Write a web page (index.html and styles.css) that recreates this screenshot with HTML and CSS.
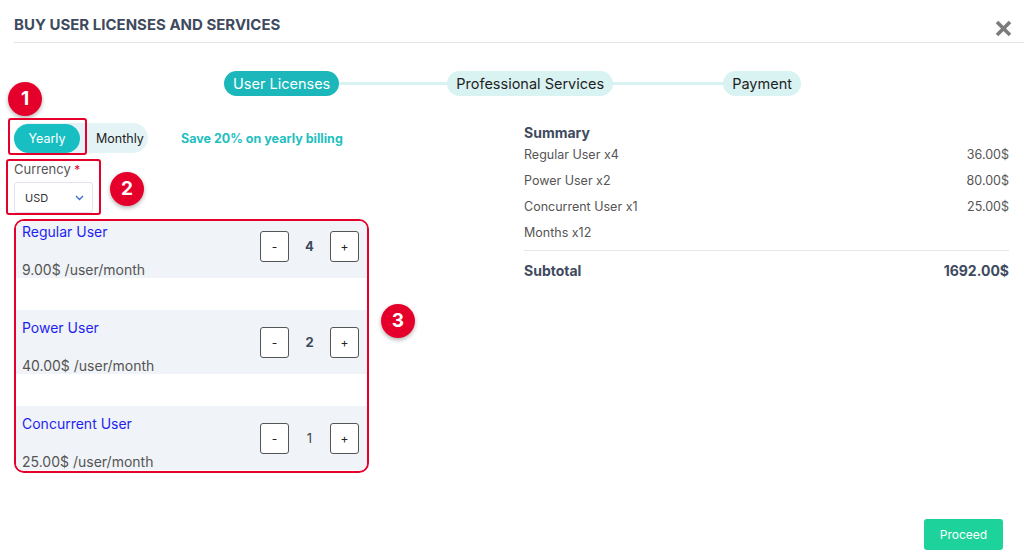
FILE: index.html
```html
<!DOCTYPE html>
<html>
<head>
<meta charset="utf-8">
<link rel="stylesheet" href="styles.css">
</head>
<body>
<div class="page">
  <header class="header">
    <h1 class="title">BUY USER LICENSES AND SERVICES</h1>
    <button class="close" aria-label="Close">
      <svg width="17" height="17" viewBox="0 0 17 17"><path d="M2 2 L15 15 M15 2 L2 15" stroke="#7b7b7b" stroke-width="3.6" stroke-linecap="butt"/></svg>
    </button>
  </header>

  <nav class="stepper">
    <span class="step active">User Licenses</span>
    <span class="connector"></span>
    <span class="step">Professional Services</span>
    <span class="connector connector2"></span>
    <span class="step">Payment</span>
  </nav>

  <main class="main">
    <section class="left">
      <span class="badge badge1">1</span>
      <span class="mark mark1"></span>
      <span class="badge badge2">2</span>
      <span class="mark mark2"></span>
      <span class="badge badge3">3</span>

      <div class="billing-row">
        <div class="toggle">
          <span class="opt on">Yearly</span>
          <span class="opt">Monthly</span>
        </div>
        <span class="save">Save 20% on yearly billing</span>
      </div>

      <div class="currency">
        <label class="label">Currency <span class="req">*</span></label>
        <div class="select">
          <span>USD</span>
          <svg width="9" height="6" viewBox="0 0 9 6"><path d="M1 1 L4.5 4.5 L8 1" fill="none" stroke="#3b6fd4" stroke-width="1.4"/></svg>
        </div>
      </div>

      <div class="list">
        <div class="item first">
          <div class="info">
            <div class="name">Regular User</div>
            <div class="price">9.00$ /user/month</div>
          </div>
          <div class="qty">
            <button class="qbtn">-</button>
            <span class="num">4</span>
            <button class="qbtn">+</button>
          </div>
        </div>
        <div class="item">
          <div class="info">
            <div class="name">Power User</div>
            <div class="price">40.00$ /user/month</div>
          </div>
          <div class="qty">
            <button class="qbtn">-</button>
            <span class="num">2</span>
            <button class="qbtn">+</button>
          </div>
        </div>
        <div class="item">
          <div class="info">
            <div class="name">Concurrent User</div>
            <div class="price">25.00$ /user/month</div>
          </div>
          <div class="qty">
            <button class="qbtn">-</button>
            <span class="num num-light">1</span>
            <button class="qbtn">+</button>
          </div>
        </div>
      </div>
    </section>

    <section class="summary">
      <h2 class="sum-title">Summary</h2>
      <div class="sum-row"><span>Regular User x4</span><span>36.00$</span></div>
      <div class="sum-row"><span>Power User x2</span><span>80.00$</span></div>
      <div class="sum-row"><span>Concurrent User x1</span><span>25.00$</span></div>
      <div class="sum-row"><span>Months x12</span><span></span></div>
      <div class="sum-total"><span>Subtotal</span><span>1692.00$</span></div>
    </section>
  </main>

  <footer class="footer">
    <button class="proceed">Proceed</button>
  </footer>
</div>
</body>
</html>
```

FILE: styles.css
```css
* { box-sizing: border-box; }
html, body { margin: 0; padding: 0; background: #fff; }
body { font-family: Inter, "Noto Sans", "Liberation Sans", sans-serif; color: #333; }
.page { width: 1024px; height: 556px; overflow: hidden; }

.header {
  margin-left: 14px;
  height: 43px;
  border-bottom: 1px solid #e3e5e9;
  display: flex;
  justify-content: space-between;
  align-items: flex-start;
}
.title {
  margin: 15px 0 0 0;
  font-size: 15px;
  line-height: 20px;
  font-weight: 700;
  color: #3e4a5e;
}
.close {
  margin: 20px 12px 0 0;
  padding: 0;
  border: 0;
  background: none;
  width: 17px;
  height: 17px;
  display: flex;
}

.stepper {
  display: flex;
  justify-content: center;
  align-items: center;
  padding-top: 28px;
  padding-left: 1px;
}
.step {
  height: 25px;
  border-radius: 13px;
  background: #d9f2f2;
  color: #1f1f1f;
  font-size: 14.5px;
  line-height: 25px;
  padding: 0 9px;
  white-space: nowrap;
}
.step.active { background: #1bb7bb; color: #fff; }
.connector { width: 108px; height: 3px; background: #d9f2f2; }
.connector2 { width: 110px; }

.main { display: flex; padding: 0 15px 0 14px; }
.left { position: relative; width: 355px; padding-top: 27px; }

.badge {
  position: absolute;
  width: 34px; height: 34px;
  border-radius: 50%;
  background: #e5002b;
  color: #fff;
  font-weight: 700;
  font-size: 19px;
  line-height: 34px;
  text-align: center;
  box-shadow: 0 2px 4px rgba(0,0,0,0.3);
  z-index: 2;
}
.badge1 { left: -6px; top: -14px; }
.badge2 { left: 96px; top: 76px; }
.badge3 { left: 367px; top: 208px; }

.mark {
  position: absolute;
  border: 2px solid #e5002b;
  border-radius: 3px;
  z-index: 2;
}
.mark1 { left: -6px; top: 22px; width: 79px; height: 37px; }
.mark2 { left: -8px; top: 63px; width: 95px; height: 56px; }

.billing-row { display: flex; align-items: center; height: 30px; }
.toggle {
  display: flex;
  align-items: center;
  width: 134px;
  height: 30px;
  border-radius: 15px;
  background: #e4f4f6;
}
.opt { font-size: 12.5px; color: #222; height: 29px; line-height: 29px; }
.opt.on {
  width: 66px;
  text-align: center;
  background: #17bfc3;
  color: #fff;
  border-radius: 15px;
  margin-right: 16px;
}
.save {
  margin-left: 33px;
  font-size: 12.5px;
  font-weight: 700;
  color: #1fbfc0;
}

.currency { padding-top: 9px; }
.label { display: block; font-size: 13px; line-height: 15px; color: #555; }
.req { color: #e5002b; font-size: 12px; vertical-align: top; }
.select {
  margin-top: 5px;
  width: 79px;
  height: 31px;
  border: 1px solid #dfe4f0;
  border-radius: 3px;
  display: flex;
  align-items: center;
  justify-content: space-between;
  padding: 0 8px 0 10px;
  font-size: 11px;
  color: #333;
}

.list {
  margin-top: 6px;
  width: 355px;
  height: 254px;
  border: 2px solid #e5002b;
  border-radius: 10px;
  overflow: hidden;
}
.item {
  height: 64px;
  background: #f0f3f7;
  display: flex;
  justify-content: space-between;
  align-items: center;
  padding: 0 8px 0 6px;
  margin-top: 32px;
}
.item.first { margin-top: -7px; }
.info { align-self: stretch; padding-top: 9px; }
.name { font-size: 14px; line-height: 18px; color: #1f1ff0; }
.price { margin-top: 20px; font-size: 14px; line-height: 18px; color: #555; }
.qty { display: flex; align-items: center; }
.qbtn {
  width: 29px; height: 31px;
  border: 1px solid #555;
  border-radius: 3px;
  background: #fff;
  font-family: inherit;
  font-size: 12px;
  color: #222;
  padding: 0;
}
.num { width: 41px; text-align: center; font-size: 13px; font-weight: 700; color: #3e4a5e; }
.num-light { font-weight: 400; color: #444; }

.summary { flex: 1; margin-left: 155px; padding-top: 28px; }
.sum-title { margin: 0; font-size: 14px; line-height: 18px; font-weight: 700; color: #3e4a5e; }
.sum-row {
  display: flex; justify-content: space-between;
  height: 26px; line-height: 26px;
  font-size: 12.5px; color: #555;
}
.sum-total {
  margin-top: 4px;
  border-top: 1px solid #e5e7ea;
  padding-top: 10px;
  display: flex; justify-content: space-between;
  font-size: 14px; line-height: 20px; font-weight: 700; color: #3e4a5e;
}

.footer { display: flex; justify-content: flex-end; padding-right: 21px; margin-top: 46px; }
.proceed {
  width: 79px; height: 31px;
  border: 0; border-radius: 3px;
  background: #1ed39b;
  color: #fff;
  font-family: inherit;
  font-size: 12px;
}
```
